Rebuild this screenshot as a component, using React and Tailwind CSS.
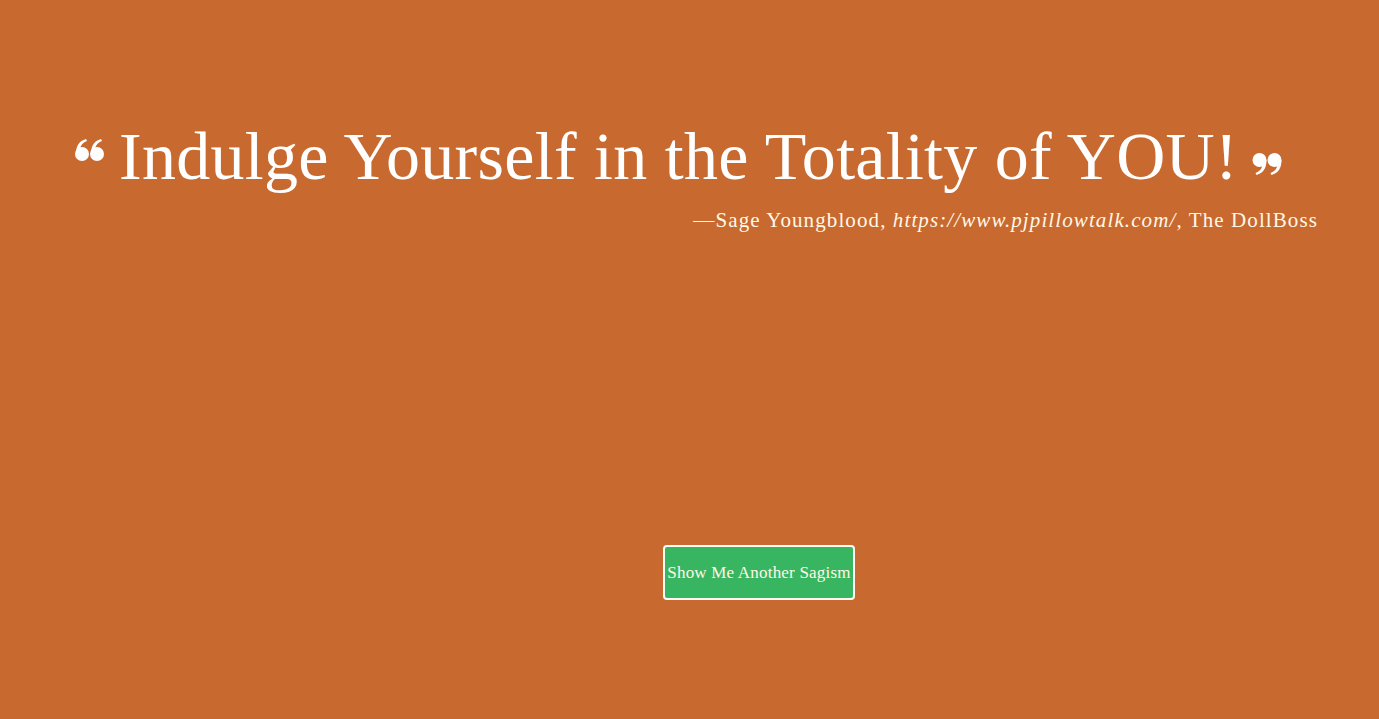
export default function App() {
  return (
    <div className="w-full h-[719px] bg-[#c8692f] overflow-hidden" style={{ fontFamily: '"Liberation Serif", serif' }}>
      <div className="pt-[112px] pl-[75px] pr-[90px] flex items-start">
        <svg width="30" height="24" viewBox="0 0 30 24" className="mt-[26px] shrink-0" fill="#ffffff">
          <circle cx="7" cy="16" r="7" />
          <path d="M1 16 C1 8 4 3 11 1 L12 3 C7 5 5 8 5 13 Z" />
          <circle cx="22" cy="16" r="7" />
          <path d="M16 16 C16 8 19 3 26 1 L27 3 C22 5 20 8 20 13 Z" />
        </svg>
        <h1 className="ml-[14px] text-white text-[68px] leading-[88px] whitespace-nowrap tracking-[0.28px]">
          Indulge Yourself in the Totality of YOU!
        </h1>
        <svg width="31" height="24" viewBox="0 0 30 24" className="ml-[13px] mt-[40px] shrink-0" fill="#ffffff">
          <circle cx="8" cy="8" r="7" />
          <path d="M15 8 C15 16 12 21 5 23 L4 21 C9 19 11 16 11 11 Z" />
          <circle cx="23" cy="8" r="7" />
          <path d="M30 8 C30 16 27 21 20 23 L19 21 C24 19 26 16 26 11 Z" />
        </svg>
      </div>
      <div className="flex justify-end pr-[61px] mt-[5px]">
        <p className="text-[#fff8e7] text-[21px] leading-[30px] tracking-[1.1px]">
          —Sage Youngblood, <em>https://www.pjpillowtalk.com/</em>, The DollBoss
        </p>
      </div>
      <div className="flex pl-[663px] mt-[310px]">
        <button className="w-[192px] h-[55px] bg-[#37b561] border-2 border-[#fffdf5] rounded-[4px] text-[#fff8e7] text-[17px] tracking-[0.2px] leading-none">
          Show Me Another Sagism
        </button>
      </div>
    </div>
  );
}
